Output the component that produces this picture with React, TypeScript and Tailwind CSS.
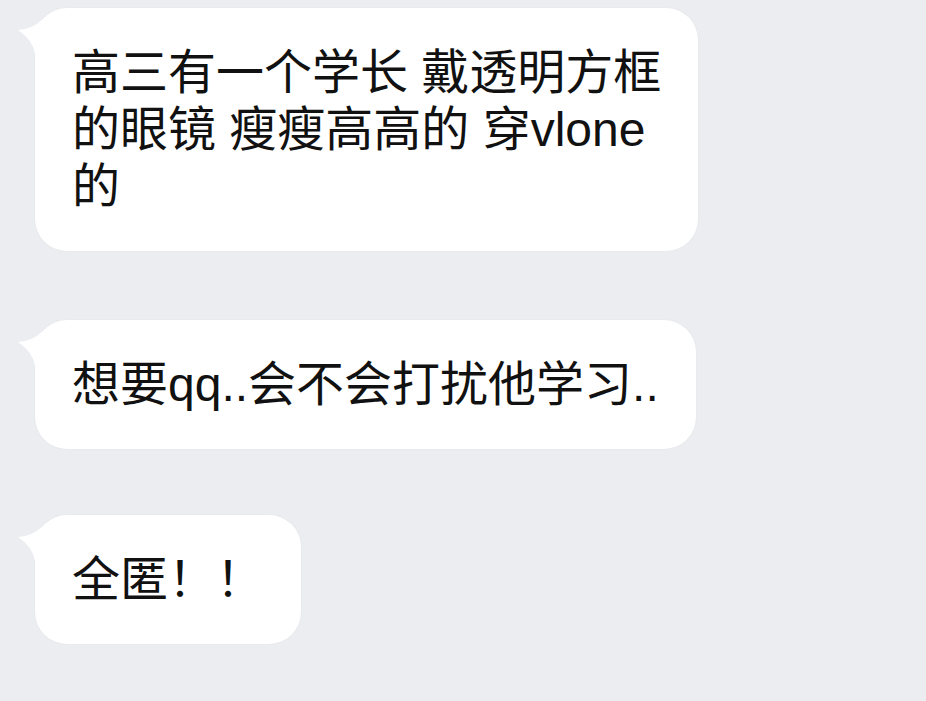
import React from "react";

function Tail() {
  return (
    <svg
      className="absolute left-[-18px] top-[10px]"
      width="40"
      height="40"
      viewBox="0 0 40 40"
    >
      <path d="M1 12 Q 14 12 26 1 L 36 8 L 36 36 L 18 36 Q 16 22 1 12 Z" fill="#ffffff" />
    </svg>
  );
}

function Bubble({ children, className }: { children: React.ReactNode; className?: string }) {
  return (
    <div
      className={
        "relative w-fit rounded-[32px] bg-white px-[37px] py-[36px] text-[48px] leading-[57px] text-[#111] shadow-[0_0_2px_rgba(0,0,0,0.05)] " +
        (className ?? "")
      }
    >
      <Tail />
      <p className="relative">{children}</p>
    </div>
  );
}

export default function App() {
  return (
    <div
      className="min-h-screen w-full bg-[#ebedf0] pl-[35px] pt-[8px] flex flex-col"
      style={{ fontFamily: '"Liberation Sans", "Noto Sans CJK SC", sans-serif' }}
    >
      <Bubble>
        高三有一个学长 戴透明方框
        <br />
        的眼镜 瘦瘦高高的 穿vlone
        <br />
        的
      </Bubble>

      <Bubble className="mt-[69px]">想要qq..会不会打扰他学习..</Bubble>

      <Bubble className="mt-[66px]">全匿！！</Bubble>
    </div>
  );
}
